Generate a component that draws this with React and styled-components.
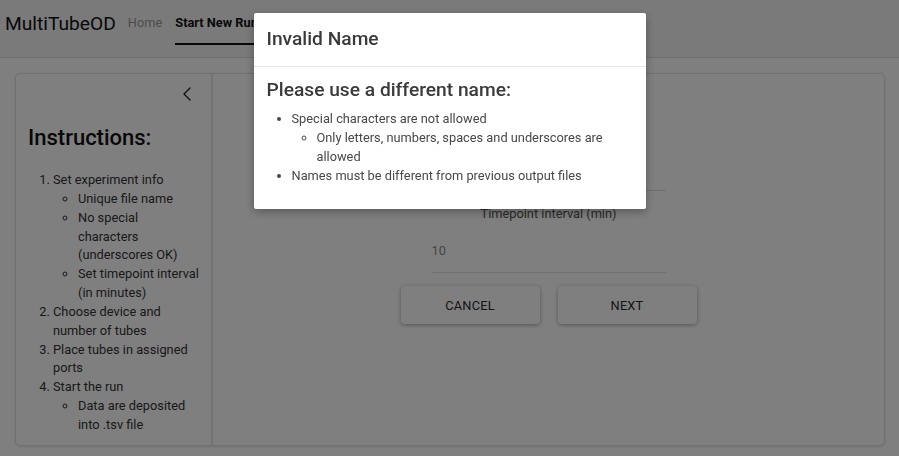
import React from "react";
import styled, { createGlobalStyle } from "styled-components";
import { ChevronLeft } from "lucide-react";

const GlobalStyle = createGlobalStyle`
  html, body {
    margin: 0;
    padding: 0;
    height: 100%;
    background: #ffffff;
    font-family: Roboto, "Liberation Sans", sans-serif;
    overflow: hidden;
  }
`;

const Page = styled.div`
  width: 100vw;
  height: 100vh;
  display: flex;
  flex-direction: column;
`;

const Header = styled.header`
  height: 58px;
  flex: none;
  display: flex;
  align-items: stretch;
  background: #f4f4f4;
  border-bottom: 1px solid #dcdcdc;
  box-sizing: border-box;
`;

const Brand = styled.div`
  display: flex;
  align-items: center;
  padding: 0 12px 0 5px;
  font-size: 19.2px;
  color: #111;
  margin-top: -10px;
`;

const Nav = styled.nav`
  display: flex;
  gap: 13px;
`;

const Tab = styled.div`
  display: flex;
  align-items: center;
  height: 45px;
  font-size: 12.8px;
  box-sizing: border-box;
  color: ${(p) => (p.$active ? "#111" : "#9a9a9a")};
  font-weight: ${(p) => (p.$active ? 700 : 400)};
  border-bottom: 2px solid ${(p) => (p.$active ? "#111" : "transparent")};
  padding-top: 2px;
`;

const Main = styled.main`
  flex: 1;
  display: flex;
  padding: 15px 14px 10px 15px;
  min-height: 0;
`;

const Card = styled.section`
  flex: 1;
  display: flex;
  border: 1px solid #e0e0e0;
  border-radius: 5px;
  background: #fff;
  box-shadow: 0 1px 3px rgba(0, 0, 0, 0.12);
  overflow: hidden;
`;

const Sidebar = styled.aside`
  width: 197px;
  flex: none;
  border-right: 2px solid #e6e6e6;
  padding: 8px 12px 0 12px;
  box-sizing: border-box;
  color: #333;
`;

const CollapseRow = styled.div`
  display: flex;
  justify-content: flex-end;
  color: #222;
`;

const SideTitle = styled.h2`
  margin: 19px 0 0;
  font-size: 22px;
  font-weight: 500;
  line-height: 26px;
  color: #111;
`;

const StepList = styled.ol`
  margin: 20px 0 0;
  padding-left: 25px;
  font-size: 12.8px;
  line-height: 18.85px;
`;

const SubList = styled.ul`
  margin: 0;
  padding-left: 25px;
  list-style: circle;
`;

const Content = styled.div`
  flex: 1;
  display: flex;
  flex-direction: column;
  align-items: center;
  padding-top: 48px;
`;

const FieldLabel = styled.div`
  font-size: 12.8px;
  color: #555;
  height: 19px;
  line-height: 19px;
  text-align: center;
`;

const Field = styled.div`
  width: 234px;
  height: 42px;
  display: flex;
  align-items: center;
  padding-bottom: 2px;
  box-sizing: border-box;
  font-size: 12.8px;
  color: #8a8a8a;
  border-bottom: 1px solid #dedede;
  margin: 8px 0 13px;
`;

const ButtonRow = styled.div`
  display: flex;
  gap: 18px;
`;

const Button = styled.button`
  width: 139px;
  height: 38px;
  border: none;
  border-radius: 4px;
  background: #fff;
  font-family: inherit;
  font-size: 12.8px;
  letter-spacing: 0.2px;
  color: #2a2a2a;
  box-shadow: 0 1px 4px rgba(0, 0, 0, 0.35);
`;

const Backdrop = styled.div`
  position: fixed;
  inset: 0;
  background: rgba(0, 0, 0, 0.5);
`;

const Dialog = styled.div`
  position: fixed;
  top: 13px;
  left: 50%;
  transform: translateX(-50%);
  width: 392px;
  height: 196px;
  background: #fff;
  border-radius: 2px;
  box-shadow: 0 3px 10px rgba(0, 0, 0, 0.3);
  box-sizing: border-box;
`;

const DialogHead = styled.div`
  height: 54px;
  display: flex;
  align-items: center;
  padding: 0 13px 2px;
  border-bottom: 1px solid #e5e5e5;
  box-sizing: border-box;
  font-size: 19.2px;
  font-weight: 500;
  color: #3a3a3a;
`;

const DialogBody = styled.div`
  padding: 11px 13px 0;
  color: #484848;
`;

const DialogHeading = styled.h4`
  margin: 0;
  font-size: 19.2px;
  font-weight: 500;
  line-height: 24px;
  color: #3a3a3a;
`;

const RuleList = styled.ul`
  margin: 7px 0 0;
  padding-left: 25px;
  font-size: 12.8px;
  line-height: 19px;
`;

export default function App() {
  return (
    <>
      <GlobalStyle />
      <Page>
        <Header>
          <Brand>MultiTubeOD</Brand>
          <Nav>
            <Tab>Home</Tab>
            <Tab $active>Start New Run</Tab>
          </Nav>
        </Header>
        <Main>
          <Card>
            <Sidebar>
              <CollapseRow>
                <ChevronLeft size={24} strokeWidth={1.4} />
              </CollapseRow>
              <SideTitle>Instructions:</SideTitle>
              <StepList>
                <li>
                  Set experiment info
                  <SubList>
                    <li>Unique file name</li>
                    <li>No special characters (underscores OK)</li>
                    <li>Set timepoint interval (in minutes)</li>
                  </SubList>
                </li>
                <li>Choose device and number of tubes</li>
                <li>Place tubes in assigned ports</li>
                <li>
                  Start the run
                  <SubList>
                    <li>Data are deposited into .tsv file</li>
                  </SubList>
                </li>
              </StepList>
            </Sidebar>
            <Content>
              <FieldLabel />
              <Field />
              <FieldLabel>Timepoint interval (min)</FieldLabel>
              <Field>10</Field>
              <ButtonRow>
                <Button>CANCEL</Button>
                <Button>NEXT</Button>
              </ButtonRow>
            </Content>
          </Card>
        </Main>
      </Page>
      <Backdrop />
      <Dialog role="dialog">
        <DialogHead>Invalid Name</DialogHead>
        <DialogBody>
          <DialogHeading>Please use a different name:</DialogHeading>
          <RuleList>
            <li>
              Special characters are not allowed
              <SubList>
                <li>Only letters, numbers, spaces and underscores are allowed</li>
              </SubList>
            </li>
            <li>Names must be different from previous output files</li>
          </RuleList>
        </DialogBody>
      </Dialog>
    </>
  );
}
